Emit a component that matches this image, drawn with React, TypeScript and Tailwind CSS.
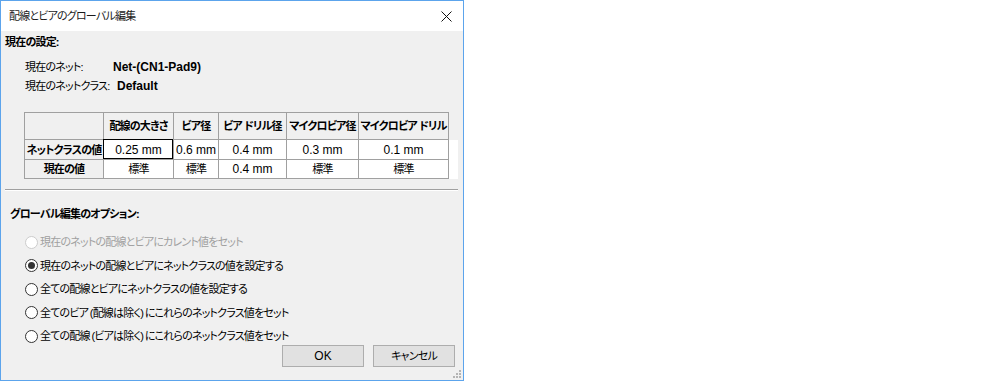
import clsx from 'clsx'

const headers = ['配線の大きさ', 'ビア径', 'ビア ドリル径', 'マイクロビア径', 'マイクロビア ドリル']

const rows = [
  { label: 'ネットクラスの値', values: ['0.25 mm', '0.6 mm', '0.4 mm', '0.3 mm', '0.1 mm'] },
  { label: '現在の値', values: ['標準', '標準', '0.4 mm', '標準', '標準'] },
]

const options = [
  { label: '現在のネットの配線とビアにカレント値をセット', disabled: true },
  { label: '現在のネットの配線とビアにネットクラスの値を設定する', checked: true },
  { label: '全ての配線とビアにネットクラスの値を設定する' },
  { label: '全てのビア (配線は除く) にこれらのネットクラス値をセット' },
  { label: '全ての配線 (ビアは除く) にこれらのネットクラス値をセット' },
]

// latin text in the dialog is a bit larger than the japanese
const latin = 'text-[12px] tracking-normal'

function Radio({ label, checked, disabled }: { label: string; checked?: boolean; disabled?: boolean }) {
  return (
    <div className="flex h-[16px] items-center">
      <span
        className={clsx(
          'flex size-[13px] items-center justify-center rounded-full border bg-white',
          disabled ? 'border-[#cccccc]' : 'border-[#333333]'
        )}
      >
        {checked && <span className="size-[7px] rounded-full bg-[#333333]" />}
      </span>
      <span
        className={clsx(
          'ml-[2px] whitespace-nowrap [word-spacing:-0.5px]',
          disabled ? 'text-[#a0a0a0]' : 'text-black'
        )}
      >
        {label}
      </span>
    </div>
  )
}

function Button({ children }: { children: React.ReactNode }) {
  return (
    <button
      type="button"
      className="flex h-[22px] w-[82px] items-center justify-center border border-[#adadad] bg-[#e1e1e1] text-black"
    >
      {children}
    </button>
  )
}

export default function App() {
  return (
    <div
      className="h-[381px] w-[1000px] bg-white text-[11px] leading-[16px] tracking-[-0.8px] text-black [font-feature-settings:'palt']"
      style={{ fontFamily: '"Liberation Sans", "Noto Sans CJK JP", sans-serif' }}
    >
      <div className="relative flex h-[381px] w-[464px] flex-col border border-[#5ca4ec]">
        {/* title bar */}
        <div className="flex h-[30px] shrink-0 items-center justify-between bg-white pl-[8px] pr-[10px]">
          <span className="text-[#1a1a1a]">配線とビアのグローバル編集</span>
          <svg width="11" height="11" viewBox="0 0 11 11" className="mr-[1px]">
            <path d="M0.5 0.5 L10.5 10.5 M10.5 0.5 L0.5 10.5" stroke="#111" strokeWidth="1" />
          </svg>
        </div>

        <div className="flex flex-1 flex-col bg-[#f0f0f0] pl-[4px] pr-[5px] pt-[3px]">
          <div className="font-bold">現在の設定:</div>

          <div className="mt-[7px] pl-[20px]">
            <div className="flex h-[19px] items-center">
              <span className="w-[88px]">現在のネット:</span>
              <span className={clsx(latin, 'font-bold')}>Net-(CN1-Pad9)</span>
            </div>
            <div className="flex h-[19px] items-center">
              <span className="w-[88px] whitespace-nowrap">現在のネットクラス:</span>
              <span className={clsx(latin, 'pl-[4px] font-bold')}>Default</span>
            </div>
          </div>

          {/* grid */}
          <div className="ml-[19px] mt-[17px] grid grid-cols-[80px_70px_45px_68px_72px_90px_9px] grid-rows-[28px_20px_19px]">
            <div className="border border-[#a0a0a0]" />
            {headers.map((h) => (
              <div
                key={h}
                className="flex items-center justify-center whitespace-nowrap border-y border-r border-[#a0a0a0] font-bold"
              >
                {h}
              </div>
            ))}
            <div />
            {rows.map((r, ri) => (
              <div key={r.label} className="contents">
                <div className="flex items-center justify-center whitespace-nowrap border-x border-b border-[#a0a0a0] font-bold">
                  {r.label}
                </div>
                {r.values.map((v, vi) => (
                  <div
                    key={vi}
                    className={clsx(
                      'relative flex items-center justify-center whitespace-nowrap border-b border-r border-[#a0a0a0] bg-white',
                      v.includes('mm') && latin
                    )}
                  >
                    {v}
                    {ri === 0 && vi === 0 && (
                      <span className="absolute -left-px -top-px bottom-0 right-0 border border-black" />
                    )}
                  </div>
                ))}
                <div className="bg-white" />
              </div>
            ))}
          </div>

          {/* separator */}
          <div className="mt-[10px] h-[2px] border-t border-[#a0a0a0] border-b border-b-white" />

          <div className="ml-[5px] mt-[15px] font-bold">グローバル編集のオプション:</div>

          <div className="ml-[20px] mt-[12px] flex flex-col gap-[7.5px]">
            {options.map((o) => (
              <Radio key={o.label} {...o} />
            ))}
          </div>

          <div className="mt-[1px] flex justify-end gap-[9px] pr-[3px]">
            <Button>
              <span className={latin}>OK</span>
            </Button>
            <Button>キャンセル</Button>
          </div>
        </div>

        {/* resize grip */}
        <svg width="8" height="8" viewBox="0 0 8 8" className="absolute bottom-[2px] right-[2px]">
          {[
            [6, 0],
            [6, 3],
            [3, 3],
            [6, 6],
            [3, 6],
            [0, 6],
          ].map(([x, y]) => (
            <rect key={`${x}-${y}`} x={x} y={y} width="2" height="2" fill="#b4b4b4" />
          ))}
        </svg>
      </div>
    </div>
  )
}
